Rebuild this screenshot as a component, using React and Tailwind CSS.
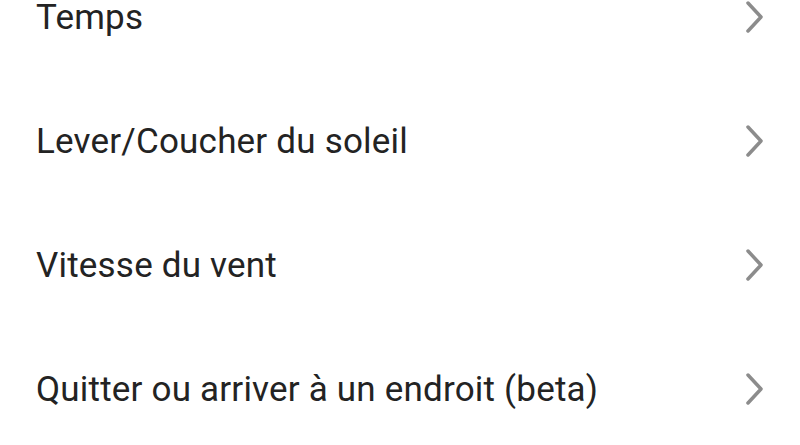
const items = [
	"Temps",
	"Lever/Coucher du soleil",
	"Vitesse du vent",
	"Quitter ou arriver à un endroit (beta)",
];

function Chevron() {
	return (
		<svg width="18" height="32" viewBox="0 0 18 32" fill="none" className="shrink-0">
			<path d="M2 2 L15 16 L2 30" stroke="#8c8c8c" strokeWidth="3.5" strokeLinecap="round" strokeLinejoin="round" />
		</svg>
	);
}

export default function App() {
	return (
		<div className="w-[800px] h-[445px] overflow-hidden bg-white" style={{ fontFamily: "Roboto, sans-serif" }}>
			<div className="-mt-[45px] flex flex-col">
				{items.map((label) => (
					<div key={label} className="h-[124px] flex items-center justify-between pl-[36px] pr-[36px]">
						<span className="text-[35px] tracking-[0.2px] text-[#232323] leading-none">{label}</span>
						<Chevron />
					</div>
				))}
			</div>
		</div>
	);
}
